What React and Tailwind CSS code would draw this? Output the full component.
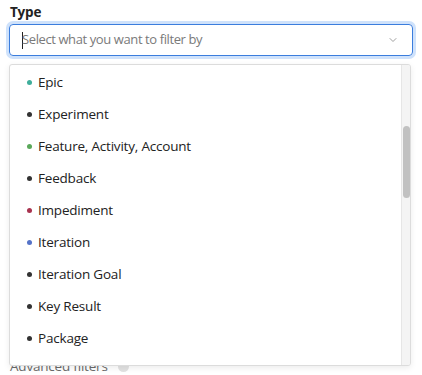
import { ChevronDown } from "lucide-react";

const types = [
  { name: "Epic", color: "bg-[#3fae9b]" },
  { name: "Experiment", color: "bg-[#333333]" },
  { name: "Feature, Activity, Account", color: "bg-[#5aa85a]" },
  { name: "Feedback", color: "bg-[#333333]" },
  { name: "Impediment", color: "bg-[#a8334f]" },
  { name: "Iteration", color: "bg-[#5573c8]" },
  { name: "Iteration Goal", color: "bg-[#333333]" },
  { name: "Key Result", color: "bg-[#333333]" },
  { name: "Package", color: "bg-[#333333]" },
  { name: "Portfolio Item", color: "bg-[#333333]" },
];

export default function App() {
  return (
    <div className="w-[422px] h-[375px] bg-white overflow-hidden font-['Open_Sans',sans-serif] text-[#222]">
      <div className="relative px-[9px] pt-[2px]">
        {/* LABEL */}
        <label className="block text-[13.5px] tracking-[-0.2px] font-bold leading-[20px] pl-[1px]">Type</label>

        {/* INPUT */}
        <div className="mt-[2px] h-[32px] flex items-center rounded-[4px] border border-[#3b7ddd] ring-[3px] ring-[#cfe2fb] pl-[12px] pr-[13px]">
          <span className="w-px h-[17px] bg-[#222]" />
          <span className="flex-1 text-[13px] tracking-[-0.4px] text-[#7a7a7a] -ml-px">Select what you want to filter by</span>
          <ChevronDown size={12} strokeWidth={2} className="text-[#a0a0a0]" />
        </div>

        {/* ADVANCED FILTERS (under the menu) */}
        <div className="mt-[300px] flex items-center gap-[10px] pl-[1px] text-[13.5px] tracking-[-0.2px] leading-[20px] text-[#6b6b6b]">
          <span>Advanced filters</span>
          <span className="w-[11px] h-[11px] rounded-full bg-[#e2e2e2]" />
        </div>

        {/* MENU */}
        <div className="absolute left-[9px] right-[11px] top-[64px] h-[302px] bg-white border border-[#dcdcdc] rounded-[3px] shadow-[0_2px_6px_rgba(0,0,0,0.08)] overflow-hidden flex">
          <ul className="flex-1 pt-[1px]">
            {types.map((t) => (
              <li key={t.name} className="h-[32px] flex items-center pl-[17px] text-[13.5px] tracking-[-0.2px]">
                <span className={`w-[5px] h-[5px] rounded-full ${t.color} mr-[6px]`} />
                {t.name}
              </li>
            ))}
          </ul>
          <div className="w-[9px] bg-[#f4f4f4] border-l border-[#e6e6e6] pt-[61px] flex justify-center">
            <div className="w-[7px] h-[72px] rounded-full bg-[#c1c1c1]" />
          </div>
        </div>
      </div>
    </div>
  );
}
